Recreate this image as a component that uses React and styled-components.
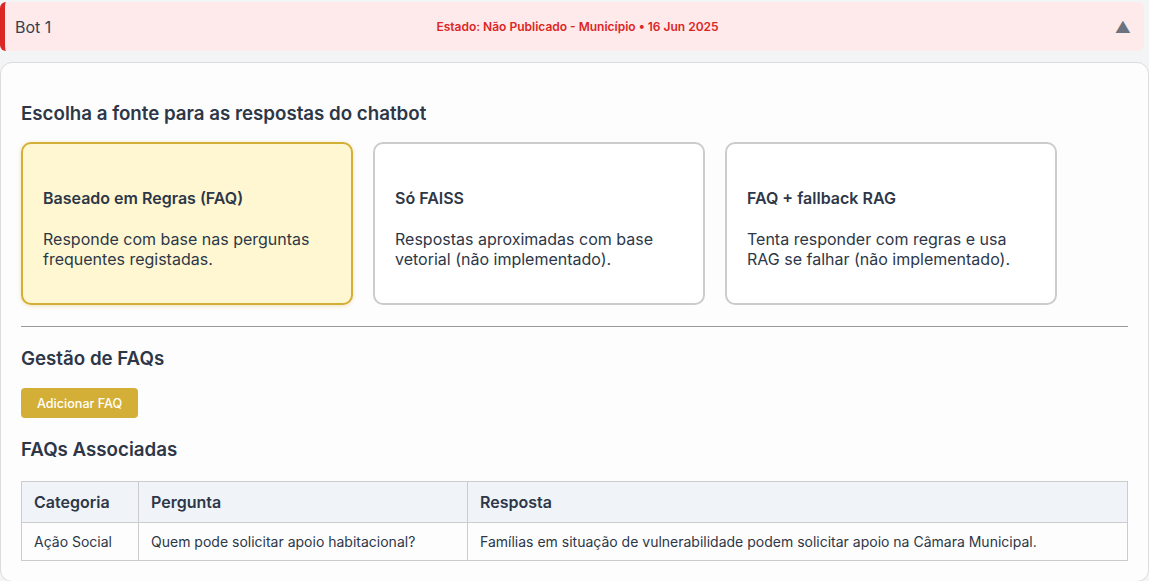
import React, { useState } from 'react';
import styled, { createGlobalStyle } from 'styled-components';

const GlobalStyle = createGlobalStyle`
  body {
    margin: 0;
    background: #f3f4f6;
    font-family: Inter, "Noto Sans", sans-serif;
    color: #2d3748;
  }
`;

const Page = styled.div`
  padding-top: 2px;
`;

const Header = styled.div`
  display: grid;
  grid-template-columns: 1fr auto 1fr;
  align-items: center;
  height: 49px;
  width: 1144px;
  box-sizing: border-box;
  padding: 0 12px 0 10px;
  background: #feeaea;
  border-left: 5px solid #dc2626;
  border-radius: 6px;
  margin-bottom: 11px;
`;

const BotName = styled.div`
  font-size: 16px;
  color: #374151;
`;

const Status = styled.div`
  font-size: 12px;
  font-weight: 600;
  color: #dc2626;
  margin-left: 8px;
`;

const Toggle = styled.span`
  justify-self: end;
  font-size: 16px;
  color: #6b7280;
  margin-right: 1px;
`;

const Card = styled.div`
  background: #fdfdfd;
  border: 1px solid #dcdcdc;
  border-radius: 12px;
  padding: 20px;
`;

const Heading = styled.h3`
  font-size: 18.72px;
  font-weight: 600;
  line-height: 22px;
  margin: ${p => p.$top}px 0 ${p => p.$bottom}px;
  color: #2d3748;
`;

const Options = styled.div`
  display: flex;
  gap: 20px;
`;

const Option = styled.div`
  width: 332px;
  height: 163px;
  box-sizing: border-box;
  border: 2px solid ${p => (p.$active ? '#d4af37' : '#cccccc')};
  background: ${p => (p.$active ? '#fff7d1' : '#ffffff')};
  box-shadow: ${p => (p.$active ? '0 1px 4px rgba(212, 175, 55, 0.35)' : 'none')};
  border-radius: 10px;
  padding: 0 20px;
  display: flex;
  flex-direction: column;
  justify-content: center;
  cursor: pointer;
`;

const OptionTitle = styled.div`
  font-size: 16px;
  font-weight: 600;
  line-height: 19px;
  color: #2d3748;
  margin-top: 10px;
  margin-bottom: 21px;
`;

const OptionText = styled.div`
  font-size: 16px;
  line-height: 20px;
  color: #2d3748;
`;

const Divider = styled.hr`
  border: none;
  border-top: 1px solid #999;
  margin: 21px 0 0;
`;

const Button = styled.button`
  font-family: inherit;
  font-size: 12.6px;
  font-weight: 500;
  color: #fff;
  background: #d4af37;
  border: none;
  border-radius: 4px;
  height: 30px;
  padding: 0 16px;
  cursor: pointer;
`;

const Table = styled.table`
  width: 100%;
  border-collapse: collapse;
`;

const Th = styled.th`
  text-align: left;
  background: #f0f4f8;
  border: 1px solid #cccccc;
  font-size: 16px;
  font-weight: 600;
  color: #2d3748;
  height: 40px;
  padding: 0 12px;
  width: ${p => p.$w || 'auto'};
`;

const Td = styled.td`
  border: 1px solid #cccccc;
  font-size: 14px;
  color: #2d3748;
  height: 37px;
  padding: 0 12px;
`;

const options = [
  { id: 'faq', title: 'Baseado em Regras (FAQ)', text: 'Responde com base nas perguntas frequentes registadas.' },
  { id: 'faiss', title: 'Só FAISS', text: 'Respostas aproximadas com base vetorial (não implementado).' },
  { id: 'rag', title: 'FAQ + fallback RAG', text: 'Tenta responder com regras e usa RAG se falhar (não implementado).' },
];

export default function App() {
  const [source, setSource] = useState('faq');

  return (
    <Page>
      <GlobalStyle />
      <Header>
        <BotName>Bot 1</BotName>
        <Status>Estado: Não Publicado - Município • 16 Jun 2025</Status>
        <Toggle>▲</Toggle>
      </Header>
      <Card>
        <Heading $top={20} $bottom={17}>Escolha a fonte para as respostas do chatbot</Heading>
        <Options>
          {options.map(o => (
            <Option key={o.id} $active={source === o.id} onClick={() => setSource(o.id)}>
              <OptionTitle>{o.title}</OptionTitle>
              <OptionText>{o.text}</OptionText>
            </Option>
          ))}
        </Options>
        <Divider />
        <Heading $top={21} $bottom={18}>Gestão de FAQs</Heading>
        <Button>Adicionar FAQ</Button>
        <Heading $top={21} $bottom={20}>FAQs Associadas</Heading>
        <Table>
          <thead>
            <tr>
              <Th $w="92px">Categoria</Th>
              <Th $w="304px">Pergunta</Th>
              <Th>Resposta</Th>
            </tr>
          </thead>
          <tbody>
            <tr>
              <Td>Ação Social</Td>
              <Td>Quem pode solicitar apoio habitacional?</Td>
              <Td>Famílias em situação de vulnerabilidade podem solicitar apoio na Câmara Municipal.</Td>
            </tr>
          </tbody>
        </Table>
      </Card>
    </Page>
  );
}
